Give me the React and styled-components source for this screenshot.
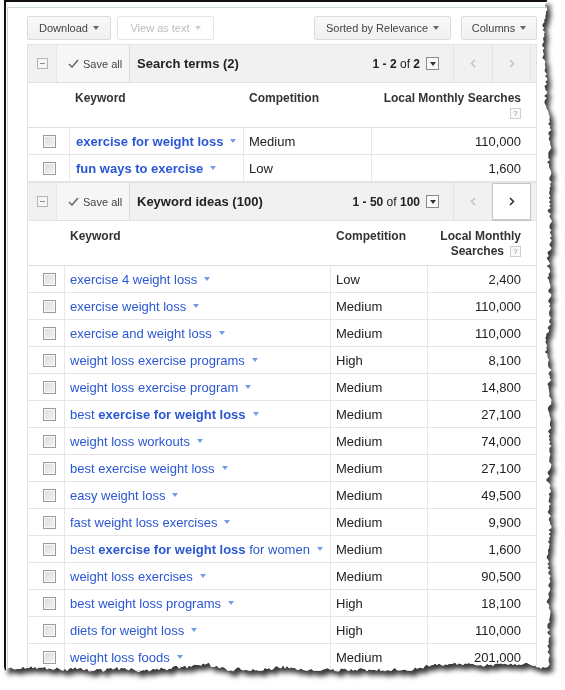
import React from 'react';
import styled, { createGlobalStyle, css } from 'styled-components';

const GlobalStyle = createGlobalStyle`
  html, body {
    margin: 0;
    padding: 0;
    background: #fff;
  }
  body {
    font-family: "Liberation Sans", Arial, sans-serif;
    color: #222;
  }
`;

// jagged right/bottom edge of the clipped screenshot
const TEAR = (() => {
  let s = 97;
  const rnd = () => {
    s = (s * 16807) % 2147483647;
    return s / 2147483647;
  };
  const W = 543;
  const H = 667;
  const pts = ['0px 0px', `${W}px 0px`];
  let drift = 0;
  for (let y = 2; y < H; y += 2) {
    drift = Math.max(-3.5, Math.min(3.5, drift + (rnd() - 0.5) * 2.2));
    pts.push(`${(W + drift + (rnd() - 0.5) * 3).toFixed(1)}px ${y}px`);
  }
  for (let x = W; x > 0; x -= 2) {
    drift = Math.max(-3.5, Math.min(3.5, drift + (rnd() - 0.5) * 2.2));
    pts.push(`${x}px ${(H + drift + (rnd() - 0.5) * 3).toFixed(1)}px`);
  }
  pts.push(`0px ${H}px`);
  return pts.join(', ');
})();

const Page = styled.div`
  height: 690px;
  padding-left: 4px;
  overflow: hidden;
`;

const Shadowed = styled.div`
  width: 558px;
  filter: drop-shadow(4px 5px 2.5px rgba(0, 0, 0, 0.78));
`;

const Sheet = styled.div`
  box-sizing: border-box;
  width: 554px;
  height: 682px;
  background: #fff;
  border-left: 2px solid #111;
  border-top: 2px solid #111;
  clip-path: polygon(${TEAR});
  overflow: hidden;
`;

const Window = styled.div`
  box-sizing: border-box;
  height: 100%;
  margin: 5px 0 0 1px;
  padding: 8px 0 0 19px;
  border-left: 1px solid #d2d2d2;
  border-top: 1px solid #cadcca;
`;

const Toolbar = styled.div`
  display: flex;
  gap: 6px;
  width: 510px;
  height: 24px;
`;

const Spacer = styled.div`
  flex: 1;
`;

const ToolButton = styled.div`
  box-sizing: border-box;
  display: flex;
  align-items: center;
  justify-content: center;
  width: ${p => p.$w}px;
  height: 24px;
  margin-left: ${p => p.$gap || 0}px;
  border: 1px solid #dcdcdc;
  border-radius: 2px;
  background: linear-gradient(#f8f8f8, #f1f1f1);
  font-size: 11px;
  color: #444;
  ${p => p.$disabled && css`
    background: #fff;
    border-color: #e6e6e6;
    color: #bdbdbd;
  `}
`;

const DownTri = styled.span`
  display: inline-block;
  margin-left: ${p => p.$gap ?? 5}px;
  border-left: 3.5px solid transparent;
  border-right: 3.5px solid transparent;
  border-top: 4px solid ${p => p.$color || '#777'};
`;

const Table = styled.div`
  box-sizing: border-box;
  width: 510px;
  margin-top: 4px;
  border-left: 1px solid #e1e1e1;
  border-right: 1px solid #e1e1e1;
`;

const SectionBar = styled.div`
  box-sizing: border-box;
  display: flex;
  align-items: stretch;
  height: 39px;
  background: #f1f1f1;
  border-top: 1px solid #e4e4e4;
  border-bottom: 1px solid #e4e4e4;
`;

const Collapse = styled.div`
  box-sizing: border-box;
  align-self: center;
  position: relative;
  width: 11px;
  height: 11px;
  margin: 0 8px 0 9px;
  border: 1px solid #b4b4b4;
  background: #f6f6f6;
  &::after {
    content: '';
    position: absolute;
    left: 2px;
    right: 2px;
    top: 4px;
    height: 1px;
    background: #8c8c8c;
  }
`;

const SaveAll = styled.div`
  box-sizing: border-box;
  display: flex;
  align-items: center;
  gap: 4px;
  width: 74px;
  padding-left: 11px;
  background: #f6f6f6;
  border-left: 1px solid #e6e6e6;
  border-right: 1px solid #dcdcdc;
  box-shadow: 0 1px 0 #e0e0e0;
  font-size: 11px;
  color: #444;
`;

const SectionTitle = styled.div`
  display: flex;
  align-items: center;
  margin-left: 7px;
  font-size: 13px;
  font-weight: bold;
  color: #222;
`;

const Pager = styled.div`
  display: flex;
  align-items: center;
  margin-left: auto;
  font-size: 12px;
  color: #222;
  b {
    font-weight: bold;
  }
`;

const PagerMenu = styled.span`
  box-sizing: border-box;
  display: inline-flex;
  align-items: center;
  justify-content: center;
  width: 13px;
  height: 13px;
  margin-left: 6px;
  border: 1px solid #8a8a8a;
  background: #fafafa;
`;

const NavGroup = styled.div`
  display: flex;
  margin: 0 5px 0 14px;
`;

const NavButton = styled.div`
  box-sizing: border-box;
  display: flex;
  align-items: center;
  justify-content: center;
  width: 39px;
  border-left: 1px solid #e2e2e2;
  &:last-child {
    border-right: 1px solid #e2e2e2;
  }
  ${p => p.$active && css`
    background: #fff;
    border: 1px solid #c8c8c8;
    box-shadow: 0 1px 1px rgba(0, 0, 0, 0.12);
    &:last-child {
      border-right: 1px solid #c8c8c8;
    }
  `}
`;

const HeadRow = styled.div`
  box-sizing: border-box;
  display: grid;
  grid-template-columns: ${p => p.$cols};
  height: 45px;
  background: #fff;
  border-bottom: 1px solid #dedede;
`;

const HeadCell = styled.div`
  padding: 8px ${p => (p.$right ? '15px' : '6px')} 0 6px;
  font-size: 12px;
  line-height: 15px;
  font-weight: bold;
  color: #333;
  text-align: ${p => (p.$right ? 'right' : 'left')};
`;

const HeadLine = styled.div`
  display: flex;
  align-items: center;
  justify-content: flex-end;
  height: 15px;
`;

const Help = styled.span`
  box-sizing: border-box;
  display: inline-flex;
  align-items: center;
  justify-content: center;
  width: 11px;
  height: 11px;
  margin-left: 6px;
  border: 1px solid #cfcfcf;
  background: #fafafa;
  font-size: 8px;
  line-height: 8px;
  font-weight: normal;
  color: #999;
`;

const Row = styled.div`
  box-sizing: border-box;
  display: grid;
  grid-template-columns: ${p => p.$cols};
  height: 27px;
  border-bottom: 1px solid #e4e4e4;
  background: #fff;
`;

const Cell = styled.div`
  display: flex;
  align-items: center;
  justify-content: ${p => (p.$right ? 'flex-end' : 'flex-start')};
  padding-left: ${p => (p.$check ? 15 : p.$pad || 5)}px;
  padding-right: ${p => (p.$right ? 15 : 0)}px;
  font-size: 13px;
  color: #222;
  white-space: nowrap;
  & + & {
    border-left: 1px solid #e8e8e8;
  }
`;

const Checkbox = styled.span`
  box-sizing: border-box;
  width: 13px;
  height: 13px;
  border: 1px solid #9b9b9b;
  background: linear-gradient(135deg, #dcdcdc, #f4f4f4);
  box-shadow: inset 0 0 0 1px #f8f8f8;
`;

const Keyword = styled.span`
  font-size: 13px;
  color: #2b57d2;
  font-weight: ${p => (p.$bold ? 'bold' : 'normal')};
  b {
    font-weight: bold;
  }
`;

const Chevron = ({ dir, color }) => (
  <svg width="6" height="9" viewBox="0 0 6 9">
    <polyline
      points={dir === 'left' ? '5,1 1.5,4.5 5,8' : '1,1 4.5,4.5 1,8'}
      fill="none"
      stroke={color}
      strokeWidth="1.6"
    />
  </svg>
);

const CheckMark = () => (
  <svg width="11" height="9" viewBox="0 0 11 9">
    <polyline points="1,5 4,8 10,1" fill="none" stroke="#6d6d6d" strokeWidth="1.6" />
  </svg>
);

const TERMS_COLS = '41px 174px 128px 1fr';
const IDEAS_COLS = '36px 266px 97px 1fr';

const terms = [
  { kw: [['exercise for weight loss']], comp: 'Medium', n: '110,000' },
  { kw: [['fun ways to exercise']], comp: 'Low', n: '1,600' },
];

const ideas = [
  { kw: [['exercise 4 weight loss']], comp: 'Low', n: '2,400' },
  { kw: [['exercise weight loss']], comp: 'Medium', n: '110,000' },
  { kw: [['exercise and weight loss']], comp: 'Medium', n: '110,000' },
  { kw: [['weight loss exercise programs']], comp: 'High', n: '8,100' },
  { kw: [['weight loss exercise program']], comp: 'Medium', n: '14,800' },
  { kw: [['best '], ['exercise for weight loss', true]], comp: 'Medium', n: '27,100' },
  { kw: [['weight loss workouts']], comp: 'Medium', n: '74,000' },
  { kw: [['best exercise weight loss']], comp: 'Medium', n: '27,100' },
  { kw: [['easy weight loss']], comp: 'Medium', n: '49,500' },
  { kw: [['fast weight loss exercises']], comp: 'Medium', n: '9,900' },
  { kw: [['best '], ['exercise for weight loss', true], [' for women']], comp: 'Medium', n: '1,600' },
  { kw: [['weight loss exercises']], comp: 'Medium', n: '90,500' },
  { kw: [['best weight loss programs']], comp: 'High', n: '18,100' },
  { kw: [['diets for weight loss']], comp: 'High', n: '110,000' },
  { kw: [['weight loss foods']], comp: 'Medium', n: '201,000' },
];

const SectionHeader = ({ title, to, total, nextActive }) => (
  <SectionBar>
    <Collapse />
    <SaveAll>
      <CheckMark />
      Save all
    </SaveAll>
    <SectionTitle>{title}</SectionTitle>
    <Pager>
      <b>1 - {to}</b>&nbsp;of&nbsp;<b>{total}</b>
      <PagerMenu>
        <DownTri $color="#333" $gap={0} />
      </PagerMenu>
    </Pager>
    <NavGroup>
      <NavButton>
        <Chevron dir="left" color="#c4c4c4" />
      </NavButton>
      <NavButton $active={nextActive}>
        <Chevron dir="right" color={nextActive ? '#333' : '#c4c4c4'} />
      </NavButton>
    </NavGroup>
  </SectionBar>
);

// "Local Monthly Searches" header; the help box trails the last line or gets its own
const SearchesHead = ({ lines, helpInline }) => (
  <HeadCell $right>
    {lines.map((l, i) => (
      <HeadLine key={i}>
        {l}
        {helpInline && i === lines.length - 1 && <Help>?</Help>}
      </HeadLine>
    ))}
    {!helpInline && (
      <HeadLine>
        <Help>?</Help>
      </HeadLine>
    )}
  </HeadCell>
);

const DataRow = ({ cols, item, bold }) => (
  <Row $cols={cols}>
    <Cell $check>
      <Checkbox />
    </Cell>
    <Cell $pad={bold ? 6 : 5}>
      <Keyword $bold={bold}>
        {item.kw.map(([t, b], i) => (b ? <b key={i}>{t}</b> : <React.Fragment key={i}>{t}</React.Fragment>))}
      </Keyword>
      <DownTri $color="#6f9de6" $gap={7} />
    </Cell>
    <Cell>{item.comp}</Cell>
    <Cell $right>{item.n}</Cell>
  </Row>
);

const App = () => {
  return (
    <Page>
      <GlobalStyle />
      <Shadowed>
        <Sheet>
          <Window>
            <Toolbar>
              <ToolButton $w={84}>
                Download <DownTri $color="#666" />
              </ToolButton>
              <ToolButton $w={97} $disabled>
                View as text <DownTri $color="#cfcfcf" />
              </ToolButton>
              <Spacer />
              <ToolButton $w={137}>
                Sorted by Relevance <DownTri $color="#666" />
              </ToolButton>
              <ToolButton $w={76} $gap={4}>
                Columns <DownTri $color="#666" />
              </ToolButton>
            </Toolbar>

            <Table>
              <SectionHeader title="Search terms (2)" to="2" total="2" />
              <HeadRow $cols={TERMS_COLS}>
                <HeadCell />
                <HeadCell>Keyword</HeadCell>
                <HeadCell>Competition</HeadCell>
                <SearchesHead lines={['Local Monthly Searches']} />
              </HeadRow>
              {terms.map((item, i) => (
                <DataRow key={i} cols={TERMS_COLS} item={item} bold />
              ))}

              <SectionHeader title="Keyword ideas (100)" to="50" total="100" nextActive />
              <HeadRow $cols={IDEAS_COLS}>
                <HeadCell />
                <HeadCell>Keyword</HeadCell>
                <HeadCell>Competition</HeadCell>
                <SearchesHead lines={['Local Monthly', 'Searches']} helpInline />
              </HeadRow>
              {ideas.map((item, i) => (
                <DataRow key={i} cols={IDEAS_COLS} item={item} />
              ))}
            </Table>
          </Window>
        </Sheet>
      </Shadowed>
    </Page>
  );
};

export default App;
